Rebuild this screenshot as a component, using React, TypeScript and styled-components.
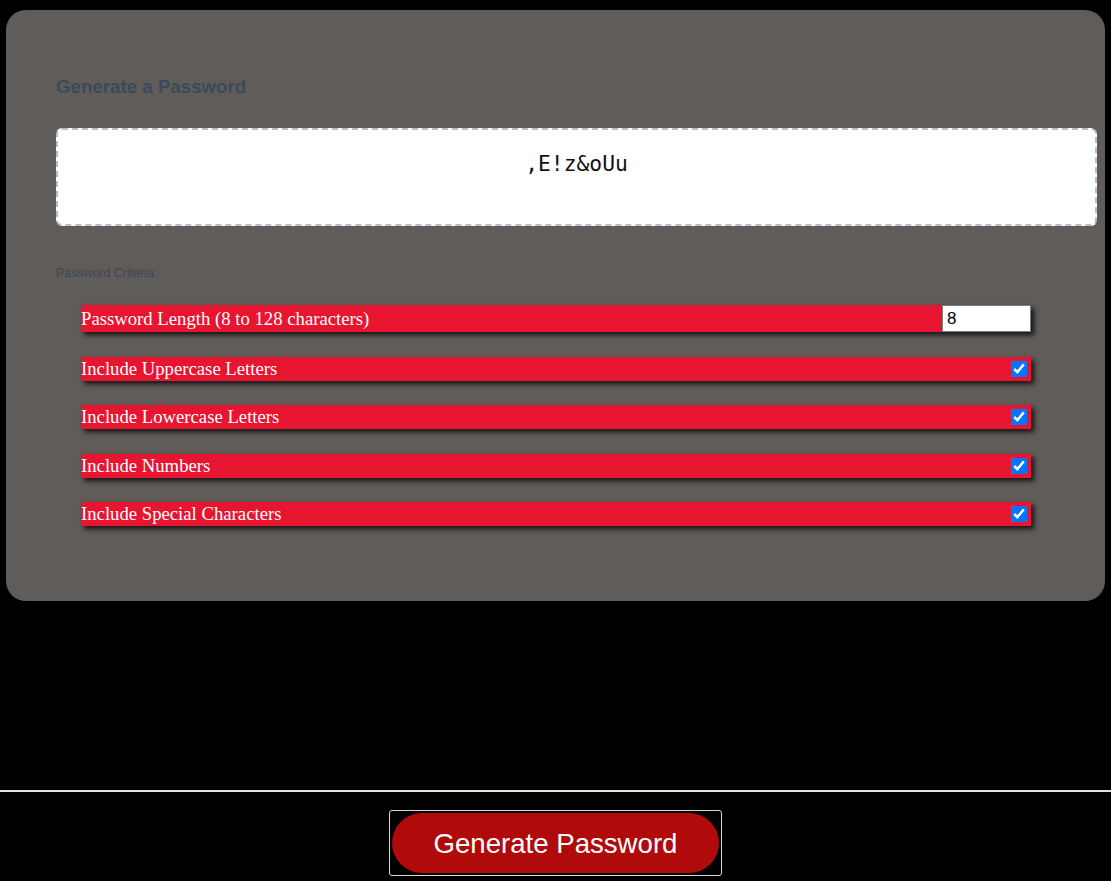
import React from "react";
import styled, { createGlobalStyle } from "styled-components";

const Global = createGlobalStyle`
  html, body { margin: 0; padding: 0; background: #000; }
  body { font-family: "Liberation Sans", Arial, sans-serif; }
  * { box-sizing: border-box; }
`;

const Page = styled.div`
  min-height: 100vh;
  display: flex;
  flex-direction: column;
`;

const Card = styled.section`
  margin: 10px 6px 0 6px;
  padding: 66px 8px 75px 50px;
  background: #605c5a;
  border-radius: 20px;
  display: flex;
  flex-direction: column;
`;

const Title = styled.h3`
  margin: 0;
  font-family: "Liberation Sans", Arial, sans-serif;
  font-size: 18.72px;
  line-height: 22px;
  font-weight: 700;
  color: #3b4a5a;
`;

const Output = styled.div`
  margin-top: 30px;
  height: 98px;
  background: #fff;
  border: 2px dashed #b8bec7;
  border-radius: 6px;
  padding-top: 21px;
  text-align: center;
  font-family: "DejaVu Sans Mono", "Liberation Mono", monospace;
  font-size: 21.3px;
  line-height: 26px;
  color: #111;
`;

const CriteriaLabel = styled.div`
  margin-top: 40px;
  font-family: "Liberation Sans", Arial, sans-serif;
  font-size: 12.4px;
  line-height: 15px;
  color: #3c4654;
`;

const Criteria = styled.div`
  margin-top: 24px;
  padding: 0 66px 0 25px;
  display: flex;
  flex-direction: column;
  gap: 24.33px;
`;

const Row = styled.label<{ $tall?: boolean }>`
  display: flex;
  align-items: center;
  justify-content: space-between;
  height: ${(p) => (p.$tall ? "27px" : "24px")};
  margin-bottom: ${(p) => (p.$tall ? "0.67px" : "0")};
  background: #e81530;
  box-shadow: 3px 3px 5px rgba(0, 0, 0, 0.8);
  font-family: "Liberation Serif", "Times New Roman", serif;
  font-size: 18.72px;
  color: #fff;
`;

const LengthInput = styled.input`
  width: 89px;
  height: 27px;
  margin: 0;
  border: 1px solid #7d7d7d;
  padding: 0 0 0 4px;
  background: #fff;
  font-family: "Liberation Sans", Arial, sans-serif;
  font-size: 17px;
  color: #000;
  outline: none;
`;

const Check = styled.input`
  width: 16px;
  height: 16px;
  margin: 0 4px 0 0;
  accent-color: #0075ff;
`;

const Footer = styled.footer`
  margin-top: auto;
  border-top: 2px solid #e2e2e2;
  padding: 18px 0 5px;
  display: flex;
  justify-content: center;
`;

const ButtonFrame = styled.div`
  border: 1px solid #d8d8d8;
  border-radius: 3px;
  padding: 2px;
`;

const GenerateButton = styled.button`
  width: 327px;
  height: 60px;
  border: none;
  border-radius: 30px;
  background: #b00a0a;
  color: #fff;
  font-family: "Liberation Sans", Arial, sans-serif;
  font-size: 27.6px;
  padding: 2px 0 0;
  cursor: pointer;
  display: block;
`;

const checks = [
  "Include Uppercase Letters",
  "Include Lowercase Letters",
  "Include Numbers",
  "Include Special Characters",
];

export default function App() {
  return (
    <>
      <Global />
      <Page>
        <Card>
          <Title>Generate a Password</Title>
          <Output>,E!z&amp;oUu</Output>
          <CriteriaLabel>Password Criteria:</CriteriaLabel>
          <Criteria>
            <Row $tall>
              Password Length (8 to 128 characters)
              <LengthInput type="text" defaultValue="8" />
            </Row>
            {checks.map((c) => (
              <Row key={c}>
                {c}
                <Check type="checkbox" defaultChecked />
              </Row>
            ))}
          </Criteria>
        </Card>
        <Footer>
          <ButtonFrame>
            <GenerateButton>Generate Password</GenerateButton>
          </ButtonFrame>
        </Footer>
      </Page>
    </>
  );
}
